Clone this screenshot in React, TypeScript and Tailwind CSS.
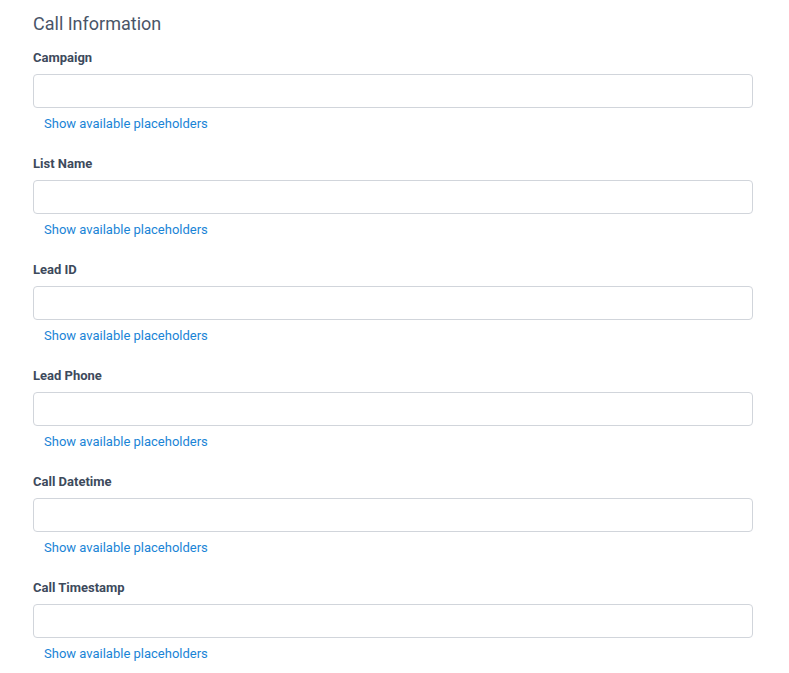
const fields = ['Campaign', 'List Name', 'Lead ID', 'Lead Phone', 'Call Datetime', 'Call Timestamp'];

export default function App() {
  return (
    <div className="min-h-screen bg-white pl-[33px] pr-[36px] pt-[11px] font-['Roboto',sans-serif]">
      <h2 className="text-[18px] leading-[26px] text-[#4a5568] mb-[10px]">Call Information</h2>
      <div className="flex flex-col gap-[19px]">
        {fields.map((f) => (
          <div key={f} className="flex flex-col">
            <label className="pt-[1px] text-[13px] leading-[20px] font-bold text-[#3d4a5c] mb-[6px]">{f}</label>
            <input
              type="text"
              className="w-full h-[34px] rounded-[4px] border border-[#d1d5db] bg-white px-3 text-[13px] outline-none"
            />
            <a href="#" className="mt-[6px] ml-[11px] text-[13px] leading-[20px] text-[#1a84d6] self-start">
              Show available placeholders
            </a>
          </div>
        ))}
      </div>
    </div>
  );
}
